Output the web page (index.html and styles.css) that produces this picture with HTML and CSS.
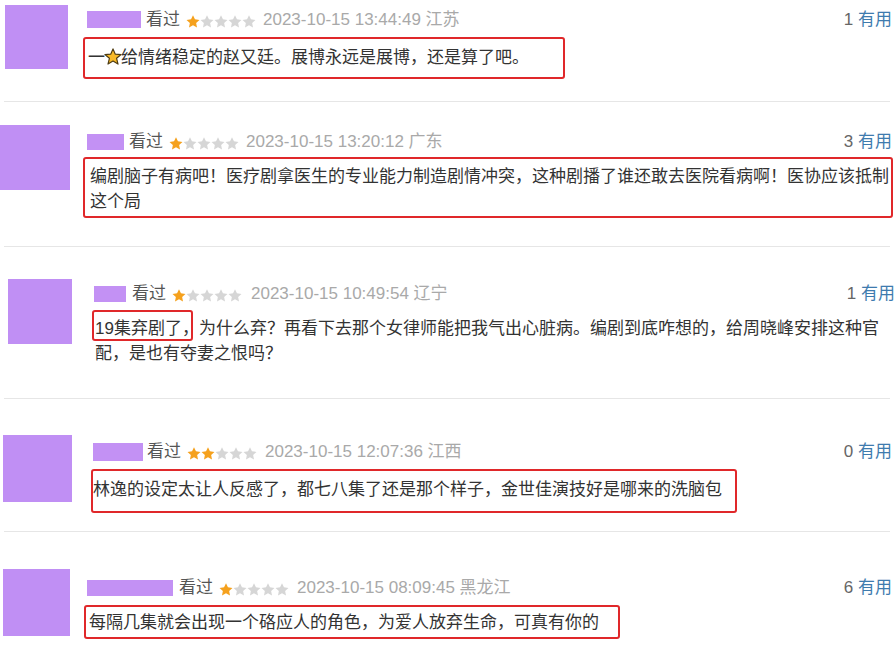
FILE: index.html
```html
<!DOCTYPE html>
<html lang="zh-CN">
<head>
<meta charset="utf-8">
<title>短评</title>
<link rel="stylesheet" href="styles.css">
</head>
<body>
<svg class="defs" width="0" height="0" aria-hidden="true">
  <defs>
    <path id="star" d="M7 .2L8.94 4.33 13.47 4.9 10.14 8.02 11 12.5 7 10.3 3 12.5 3.86 8.02 .53 4.9 5.06 4.33Z"/>
  </defs>
</svg>
<div class="list">

  <div class="row row-1">
    <div class="avatar"></div>
    <div class="body">
      <div class="meta">
        <span class="name"></span>
        <span class="watched">看过</span>
        <svg class="stars" viewBox="0 0 70 13"><use href="#star" class="on" x="0"/><use href="#star" class="off" x="14"/><use href="#star" class="off" x="28"/><use href="#star" class="off" x="42"/><use href="#star" class="off" x="56"/></svg>
        <span class="time">2023-10-15 13:44:49 江苏</span>
        <span class="useful"><span class="count">1</span> <span class="vote">有用</span></span>
      </div>
      <p class="comment boxed">一<svg class="emoji" viewBox="0 0 14 14"><path d="M7 .7L8.8 4.8 13.3 5.1 9.8 8 10.9 12.5 7 10.1 3.1 12.5 4.2 8 .7 5.1 5.2 4.8Z"/></svg>给情绪稳定的赵又廷。展博永远是展博，还是算了吧。</p>
    </div>
  </div>
  <div class="divider"></div>

  <div class="row row-2">
    <div class="avatar"></div>
    <div class="body">
      <div class="meta">
        <span class="name"></span>
        <span class="watched">看过</span>
        <svg class="stars" viewBox="0 0 70 13"><use href="#star" class="on" x="0"/><use href="#star" class="off" x="14"/><use href="#star" class="off" x="28"/><use href="#star" class="off" x="42"/><use href="#star" class="off" x="56"/></svg>
        <span class="time">2023-10-15 13:20:12 广东</span>
        <span class="useful"><span class="count">3</span> <span class="vote">有用</span></span>
      </div>
      <p class="comment boxed">编剧脑子有病吧！医疗剧拿医生的专业能力制造剧情冲突，这种剧播了谁还敢去医院看病啊！医协应该抵制这个局</p>
    </div>
  </div>
  <div class="divider"></div>

  <div class="row row-3">
    <div class="avatar"></div>
    <div class="body">
      <div class="meta">
        <span class="name"></span>
        <span class="watched">看过</span>
        <svg class="stars" viewBox="0 0 70 13"><use href="#star" class="on" x="0"/><use href="#star" class="off" x="14"/><use href="#star" class="off" x="28"/><use href="#star" class="off" x="42"/><use href="#star" class="off" x="56"/></svg>
        <span class="time">2023-10-15 10:49:54 辽宁</span>
        <span class="useful"><span class="count">1</span> <span class="vote">有用</span></span>
      </div>
      <p class="comment"><span class="mark">19集弃剧了，</span>为什么弃？再看下去那个女律师能把我气出心脏病。编剧到底咋想的，给周晓峰安排这种官配，是也有夺妻之恨吗？</p>
    </div>
  </div>
  <div class="divider"></div>

  <div class="row row-4">
    <div class="avatar"></div>
    <div class="body">
      <div class="meta">
        <span class="name"></span>
        <span class="watched">看过</span>
        <svg class="stars" viewBox="0 0 70 13"><use href="#star" class="on" x="0"/><use href="#star" class="on" x="14"/><use href="#star" class="off" x="28"/><use href="#star" class="off" x="42"/><use href="#star" class="off" x="56"/></svg>
        <span class="time">2023-10-15 12:07:36 江西</span>
        <span class="useful"><span class="count">0</span> <span class="vote">有用</span></span>
      </div>
      <p class="comment boxed">林逸的设定太让人反感了，都七八集了还是那个样子，金世佳演技好是哪来的洗脑包</p>
    </div>
  </div>
  <div class="divider"></div>

  <div class="row row-5">
    <div class="avatar"></div>
    <div class="body">
      <div class="meta">
        <span class="name"></span>
        <span class="watched">看过</span>
        <svg class="stars" viewBox="0 0 70 13"><use href="#star" class="on" x="0"/><use href="#star" class="off" x="14"/><use href="#star" class="off" x="28"/><use href="#star" class="off" x="42"/><use href="#star" class="off" x="56"/></svg>
        <span class="time">2023-10-15 08:09:45 黑龙江</span>
        <span class="useful"><span class="count">6</span> <span class="vote">有用</span></span>
      </div>
      <p class="comment boxed">每隔几集就会出现一个硌应人的角色，为爱人放弃生命，可真有你的</p>
    </div>
  </div>

</div>
</body>
</html>
```

FILE: styles.css
```css
html, body {
  margin: 0;
  padding: 0;
  background: #ffffff;
}

body {
  width: 895px;
  height: 652px;
  overflow: hidden;
  font-family: "Liberation Sans", "Noto Sans CJK SC", sans-serif;
  font-size: 17px;
  color: #333333;
}

.defs {
  position: absolute;
  width: 0;
  height: 0;
}

.row {
  display: flex;
  align-items: flex-start;
}

.avatar {
  flex: none;
  background: #c08ff4;
}

.body {
  flex: 1;
  min-width: 0;
}

.meta {
  display: flex;
  align-items: center;
  height: 25px;
  line-height: 25px;
  white-space: nowrap;
}

.name {
  flex: none;
  height: 17px;
  margin-right: 5px;
  background: #c391f4;
}

.watched {
  color: #555555;
  margin-right: 6px;
}

.stars {
  flex: none;
  width: 70px;
  height: 13px;
  margin-top: 4px;
  margin-right: 7px;
}

.stars .on {
  fill: #f5a11d;
}

.stars .off {
  fill: #d6d6d6;
}

.time {
  color: #a9a9a9;
}

.useful {
  margin-left: auto;
}

.count {
  color: #666666;
}

.vote {
  color: #3e7bae;
}

.comment {
  margin: 0;
  line-height: 25px;
  color: #333333;
}

.boxed {
  box-sizing: border-box;
  border: 2px solid #e0282a;
  border-radius: 3px;
}

.emoji {
  width: 18px;
  height: 18px;
  margin: 0 -1px 0 -1px;
  vertical-align: -3px;
  fill: #f8b928;
  stroke: #4d3b12;
  stroke-width: 0.9;
  stroke-linejoin: round;
}

.mark {
  position: relative;
}

.mark::after {
  content: "";
  position: absolute;
  left: -3px;
  right: 6px;
  top: -9px;
  bottom: -3px;
  border: 2px solid #e0282a;
  border-radius: 3px;
}

.divider {
  height: 1px;
  margin: 0 5px 0 4px;
  background: #e6e6e6;
}

/* row 1 */
.row-1 { padding-bottom: 22px; }
.row-1 .avatar { margin: 5px 0 0 5px; width: 63px; height: 64px; }
.row-1 .body { margin-left: 15px; padding-right: 3px; }
.row-1 .meta { margin-top: 7px; padding-left: 4px; }
.row-1 .name { width: 54px; }
.row-1 .comment { margin-top: 5px; width: 482px; padding: 6px 0 7px 3px; }

/* row 2 */
.row-2 { padding-bottom: 28px; }
.row-2 .avatar { margin: 23px 0 0 0; width: 70px; height: 65px; }
.row-2 .body { margin-left: 13px; padding-right: 3px; }
.row-2 .meta { margin-top: 27px; padding-left: 4px; }
.row-2 .name { width: 37px; height: 16px; }
.row-2 .comment { margin-top: 3px; width: 810px; padding: 5px 1px 2px 5px; }

/* row 3 */
.row-3 { padding-bottom: 32px; }
.row-3 .avatar { margin: 32px 0 0 8px; width: 64px; height: 65px; }
.row-3 .body { margin-left: 22px; }
.row-3 .meta { margin-top: 34px; }
.row-3 .name { width: 32px; height: 16px; margin-right: 6px; }
.row-3 .stars { margin-right: 9px; }
.row-3 .comment { margin-top: 10px; padding: 0 10px 0 1px; }

/* row 4 */
.row-4 { padding-bottom: 18px; }
.row-4 .avatar { margin: 36px 0 0 3px; width: 69px; height: 67px; }
.row-4 .body { margin-left: 19px; padding-right: 3px; }
.row-4 .meta { margin-top: 40px; padding-left: 2px; }
.row-4 .name { width: 50px; height: 18px; margin-right: 4px; }
.row-4 .stars { margin-right: 8px; }
.row-4 .comment { margin-top: 5px; width: 646px; padding: 6px 0 9px 0; }

/* row 5 */
.row-5 .avatar { margin: 37px 0 0 3px; width: 67px; height: 67px; }
.row-5 .body { margin-left: 14px; padding-right: 3px; }
.row-5 .meta { margin-top: 43px; padding-left: 3px; }
.row-5 .name { width: 86px; height: 16px; margin-right: 6px; }
.row-5 .stars { margin-right: 8px; }
.row-5 .comment { margin-top: 5px; width: 536px; padding: 3px 0 2px 3px; }
```
